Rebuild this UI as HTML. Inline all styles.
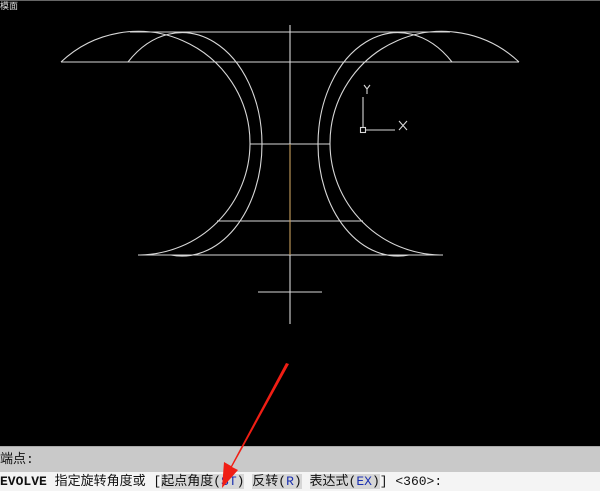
<!DOCTYPE html>
<html><head><meta charset="utf-8"><style>
body{margin:0;width:600px;height:491px;background:#000;overflow:hidden;position:relative;font-family:"Liberation Mono","Noto Sans CJK SC",monospace}
#g{position:absolute;left:0;top:446px;width:600px;height:26px;background:#c9c9c9;border-top:1px solid #aaa;box-sizing:border-box;font-size:13px;line-height:26px;color:#111}
#w{position:absolute;left:0;top:472px;width:600px;height:19px;background:#f4f4f4;font-size:13px;line-height:19px;color:#111;white-space:nowrap}
.o{background:#d6d6d6}
.b{color:#1a2fb0}
</style></head><body>
<svg width="600" height="491" style="position:absolute;left:0;top:0">
<line x1="0" y1="0.5" x2="600" y2="0.5" stroke="#666"/>
<text x="0" y="9" font-size="9" fill="#ddd" font-family="Noto Sans CJK SC">模面</text>
<g stroke="#d8d8d8" stroke-width="1.1" fill="none">
<line x1="130" y1="32" x2="450" y2="32"/>
<line x1="61" y1="62" x2="519" y2="62"/>
<line x1="250" y1="144" x2="330" y2="144"/>
<line x1="217" y1="221" x2="363" y2="221"/>
<line x1="138" y1="255" x2="443" y2="255"/>
<path d="M61,62 A112 112 0 0 1 250,144 A112 112 0 0 1 140,255"/>
<path d="M128,62 A80 112 0 0 1 262,144 A80 112 0 0 1 171,255"/>
<path d="M519,62 A112 112 0 0 0 330,144 A112 112 0 0 0 440,255"/>
<path d="M452,62 A80 112 0 0 0 318,144 A80 112 0 0 0 409,255"/>
<line x1="290" y1="25" x2="290" y2="144"/>
<line x1="290" y1="255" x2="290" y2="324"/>
<line x1="258" y1="292" x2="322" y2="292"/>
<line x1="363" y1="97" x2="363" y2="128"/>
<rect x="360.5" y="127.5" width="5" height="5"/>
<line x1="366" y1="130" x2="395" y2="130"/>
<path d="M399,121 L407,130 M407,121 L399,130"/>
<path d="M364,85 L367,89 L370,85 M367,89 L367,94"/>
</g>
<line x1="290" y1="144" x2="290" y2="255" stroke="#c8a060" stroke-width="1.1"/>
</svg>
<div id="g">端点:</div>
<div id="w"><b>EVOLVE</b> 指定旋转角度或 [<span class="o">起点角度(<span class="b">ST</span>)</span> <span class="o">反转(<span class="b">R</span>)</span> <span class="o">表达式(<span class="b">EX</span>)</span>] &lt;360&gt;:</div>
<svg width="600" height="491" style="position:absolute;left:0;top:0">
<path d="M289,364 L286,363 L231,466 L224,462 L222,488 L238,470 L232,467 Z" fill="#f01e14"/>
</svg>
</body></html>
